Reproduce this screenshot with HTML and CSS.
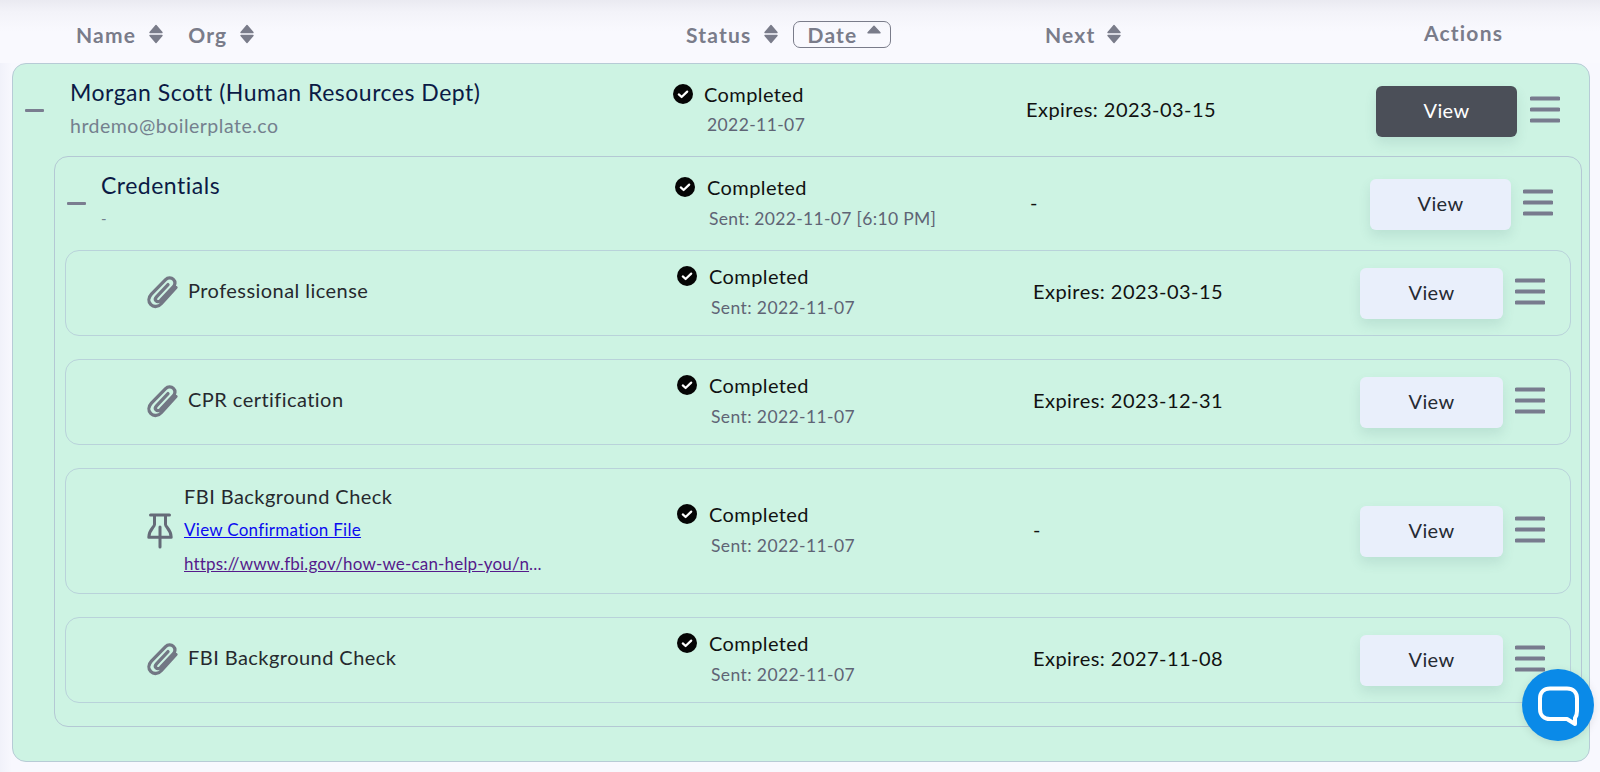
FILE: index.html
```html
<!DOCTYPE html>
<html lang="en">
<head>
<meta charset="utf-8">
<title>Credentials</title>
<link rel="stylesheet" href="styles.css">
</head>
<body>
<svg class="defs" width="0" height="0" aria-hidden="true">
  <defs>
    <symbol id="sort" viewBox="0 0 14 20"><path d="M7 1.5 13 8.5H1Z M1 11.5H13L7 18.5Z" fill="currentColor" stroke="currentColor" stroke-width="1.4" stroke-linejoin="round"/></symbol>
    <symbol id="up" viewBox="0 0 14 9"><path d="M7 1.2 13 7.8H1Z" fill="currentColor" stroke="currentColor" stroke-width="1.4" stroke-linejoin="round"/></symbol>
    <symbol id="check" viewBox="0 0 20 20"><circle cx="10" cy="10" r="10" fill="#050505"/><path d="M5.8 10.4 8.6 13 14.2 7.6" fill="none" stroke="#fff" stroke-width="2.2" stroke-linecap="round" stroke-linejoin="round"/></symbol>
    <symbol id="clip" viewBox="0 0 32 34"><path d="M29 11.5 14.5 27.5C11.5 31 6.8 31.5 3.9 28.6 1 25.8 1.4 21.5 4.4 18.2L18.6 3.6C20.8 1.4 24.3 1.3 26.4 3.4 28.6 5.5 28.4 8.7 26.2 11L13.3 24.6C12 25.9 10.2 26 9.1 24.9 8 23.8 8.2 22.2 9.5 20.8L21 8.6" fill="none" stroke="currentColor" stroke-width="3.3" stroke-linecap="round" stroke-linejoin="round"/></symbol>
    <symbol id="pin" viewBox="0 0 26 36"><path d="M3.5 2H22.5M7.5 2V11.5C7.5 14 2 16.5 1.8 24.2H24.2C24 16.5 18.5 14 18.5 11.5V2M13 14V34" fill="none" stroke="currentColor" stroke-width="3" stroke-linecap="round" stroke-linejoin="round"/></symbol>
    <symbol id="menu" viewBox="0 0 30 27"><path d="M1.5 2.5H28.5M1.5 13.5H28.5M1.5 24.5H28.5" fill="none" stroke="currentColor" stroke-width="4" stroke-linecap="round"/></symbol>
  </defs>
</svg>

<div class="page">
  <div class="table-head">
    <div class="head-left">
      <span class="sort-label">Name <svg class="sort-icon"><use href="#sort"/></svg></span>
      <span class="sort-label">Org <svg class="sort-icon"><use href="#sort"/></svg></span>
    </div>
    <div class="head-status">
      <span class="sort-label">Status <svg class="sort-icon"><use href="#sort"/></svg></span>
      <span class="date-box">Date <svg class="up-icon"><use href="#up"/></svg></span>
    </div>
    <div class="head-next">
      <span class="sort-label">Next <svg class="sort-icon"><use href="#sort"/></svg></span>
    </div>
    <div class="head-actions">Actions</div>
  </div>

  <section class="card outer">
    <div class="row row-top">
      <span class="toggle"></span>
      <div class="who">
        <div class="title">Morgan Scott (Human Resources Dept)</div>
        <div class="subtitle">hrdemo@boilerplate.co</div>
      </div>
      <div class="status">
        <div class="status-line"><svg class="check"><use href="#check"/></svg>Completed</div>
        <div class="status-sub">2022-11-07</div>
      </div>
      <div class="next">Expires: 2023-03-15</div>
      <div class="actions">
        <button class="view dark">View</button>
        <svg class="menu"><use href="#menu"/></svg>
      </div>
    </div>

    <section class="card group">
      <div class="row row-group">
        <span class="toggle"></span>
        <div class="who">
          <div class="title">Credentials</div>
          <div class="subtitle small">-</div>
        </div>
        <div class="status">
          <div class="status-line"><svg class="check"><use href="#check"/></svg>Completed</div>
          <div class="status-sub">Sent: 2022-11-07 [6:10 PM]</div>
        </div>
        <div class="next">-</div>
        <div class="actions">
          <button class="view">View</button>
          <svg class="menu"><use href="#menu"/></svg>
        </div>
      </div>

      <div class="items">
        <article class="card item">
          <div class="row row-item">
            <svg class="clip"><use href="#clip"/></svg>
            <div class="item-name">Professional license</div>
            <div class="status">
              <div class="status-line"><svg class="check"><use href="#check"/></svg>Completed</div>
              <div class="status-sub">Sent: 2022-11-07</div>
            </div>
            <div class="next">Expires: 2023-03-15</div>
            <div class="actions">
              <button class="view">View</button>
              <svg class="menu"><use href="#menu"/></svg>
            </div>
          </div>
        </article>

        <article class="card item">
          <div class="row row-item">
            <svg class="clip"><use href="#clip"/></svg>
            <div class="item-name">CPR certification</div>
            <div class="status">
              <div class="status-line"><svg class="check"><use href="#check"/></svg>Completed</div>
              <div class="status-sub">Sent: 2022-11-07</div>
            </div>
            <div class="next">Expires: 2023-12-31</div>
            <div class="actions">
              <button class="view">View</button>
              <svg class="menu"><use href="#menu"/></svg>
            </div>
          </div>
        </article>

        <article class="card item">
          <div class="row row-item row-tall">
            <svg class="pin"><use href="#pin"/></svg>
            <div class="item-name">
              <div>FBI Background Check</div>
              <div class="link-line"><a class="link" href="#">View Confirmation File</a></div>
              <div class="link-line url-line"><a class="link url" href="#">https://www.fbi.gov/how-we-can-help-you/n</a>...</div>
            </div>
            <div class="status">
              <div class="status-line"><svg class="check"><use href="#check"/></svg>Completed</div>
              <div class="status-sub">Sent: 2022-11-07</div>
            </div>
            <div class="next">-</div>
            <div class="actions">
              <button class="view">View</button>
              <svg class="menu"><use href="#menu"/></svg>
            </div>
          </div>
        </article>

        <article class="card item">
          <div class="row row-item">
            <svg class="clip"><use href="#clip"/></svg>
            <div class="item-name">FBI Background Check</div>
            <div class="status">
              <div class="status-line"><svg class="check"><use href="#check"/></svg>Completed</div>
              <div class="status-sub">Sent: 2022-11-07</div>
            </div>
            <div class="next">Expires: 2027-11-08</div>
            <div class="actions">
              <button class="view">View</button>
              <svg class="menu"><use href="#menu"/></svg>
            </div>
          </div>
        </article>
      </div>
    </section>
  </section>
</div>

<div class="chat">
  <svg width="46" height="46" viewBox="0 0 46 46"><path d="M15 6.5H32C38 6.5 42 10.5 42 16.5V29C42 32 41.5 34 40 36L40 42 32 37H15C9 37 5 33 5 27V16.5C5 10.5 9 6.5 15 6.5Z" fill="none" stroke="#fff" stroke-width="4" stroke-linejoin="round"/></svg>
</div>
</body>
</html>
```
FILE: styles.css
```css
* { box-sizing: border-box; }
html, body { margin: 0; height: 772px; overflow: hidden; }
body {
  font-family: "Lato", "Noto Sans", sans-serif;
  background: linear-gradient(90deg, #f1f2fa 0, #f8f8fe 12px);
  color: #111;
  position: relative;
}
.defs { position: absolute; }
.page { padding: 0 10px 10px 12px; }

.table-head {
  height: 63px;
  margin: 0 -10px 0 -12px;
  padding: 5px 0 0 76px;
  display: flex;
  align-items: center;
  color: #7a7c8a;
  font-size: 21px;
  font-weight: 700;
  letter-spacing: 1.2px;
  background: linear-gradient(180deg, #eaeaf1 0, #f3f3f9 12px, #f9f9fe 32px);
}
.head-left { width: 610px; display: flex; gap: 25px; }
.head-status { width: 359px; display: flex; align-items: center; gap: 15px; }
.head-next { width: 379px; }
.head-next .sort-label { gap: 11px; }
.head-actions { margin-top: -4px; }
.sort-label { display: inline-flex; align-items: center; gap: 13px; }
.sort-icon { width: 14px; height: 20px; }
.date-box {
  width: 98px;
  height: 27px;
  border: 1.5px solid #7a7c8a;
  border-radius: 7px;
  padding-left: 13px;
  display: inline-flex;
  align-items: center;
  gap: 10px;
}
.up-icon { width: 14px; height: 9px; margin-bottom: 9px; }

.card {
  background: #cdf3e3;
  border: 1px solid #b9cfd8;
  border-radius: 14px;
}
.outer { height: 699px; border-color: #b7cbd6; }
.group { margin: 0 7px 0 41px; height: 571px; border-color: #b4c8d4; }
.items { padding: 0 10px; display: flex; flex-direction: column; gap: 23px; }
.item { border-color: #b9d2da; }

.row { display: grid; align-items: center; }
.row-top { height: 92px; padding-left: 12px; grid-template-columns: 45px 603px 353px 350px auto; }
.row-group { height: 93px; padding-left: 12px; grid-template-columns: 34px 574px 355px 340px auto; }
.row-item { height: 84px; padding-left: 81px; grid-template-columns: 41px 489px 356px 327px auto; }
.row-tall { height: 124px; grid-template-columns: 37px 493px 356px 327px auto; }

.toggle { display: block; width: 19px; height: 3px; background: #7a7d90; border-radius: 1px; }
.who { padding-bottom: 2px; }
.row-group .who { padding-bottom: 3px; }
.title { font-size: 23px; line-height: 33px; color: #0b1a45; letter-spacing: .5px; }
.subtitle { font-size: 19.5px; line-height: 33px; color: #74808e; letter-spacing: .5px; }
.subtitle.small { font-size: 15px; }
.item-name { font-size: 20px; line-height: 33px; color: #26292e; letter-spacing: .45px; padding-bottom: 5px; }
.row-tall .item-name { padding-bottom: 2px; }

.link-line { font-size: 17px; line-height: 34px; }
.url-line { color: #551a8b; white-space: nowrap; letter-spacing: .18px; }
.link { color: #0b0bf0; text-decoration: underline; letter-spacing: .28px; }
.url { color: #551a8b; letter-spacing: .18px; }

.clip { width: 32px; height: 34px; color: #727784; }
.pin { width: 26px; height: 36px; color: #656b78; }

.status { padding-bottom: 1px; }
.row-group .status, .row-item .status { padding-bottom: 2px; }
.status-line { display: flex; align-items: center; gap: 11px; font-size: 20px; line-height: 30px; color: #111; letter-spacing: .4px; margin-bottom: 1px; }
.row-group .status-line, .row-item .status-line { gap: 12px; margin-bottom: 2px; }
.check { width: 20px; height: 20px; flex: none; }
.status-sub { padding-left: 34px; font-size: 17.5px; line-height: 30px; color: #5f6475; letter-spacing: .4px; }
.row-group .status-sub { letter-spacing: .32px; }

.next { font-size: 20px; color: #111; letter-spacing: .46px; padding-bottom: 5px; }
.row-top .next { padding-bottom: 2px; }
.row-group .next { padding-bottom: 4px; }

.actions { display: flex; align-items: center; gap: 12px; }
.row-top .actions { gap: 13px; }
.view {
  width: 141px;
  height: 51px;
  margin-top: 2px;
  padding: 0 0 3px;
  border: 0;
  border-radius: 6px;
  background: #e9effb;
  color: #262a33;
  font: inherit;
  font-size: 20px;
  letter-spacing: .4px;
  box-shadow: 0 6px 12px rgba(60, 110, 110, .13);
}
.view.dark { background: #4b4f58; color: #fff; }
.row-item .view { width: 143px; margin-top: 0; }
.menu { width: 30px; height: 27px; color: #787b8e; margin-top: -3px; }
.row-top .menu { margin-top: -1px; }

.chat {
  position: absolute;
  left: 1522px;
  top: 669px;
  width: 72px;
  height: 72px;
  border-radius: 50%;
  background: #0a8ae8;
  display: flex;
  align-items: center;
  justify-content: center;
  box-shadow: 0 2px 8px rgba(0, 0, 0, .1);
}
```
